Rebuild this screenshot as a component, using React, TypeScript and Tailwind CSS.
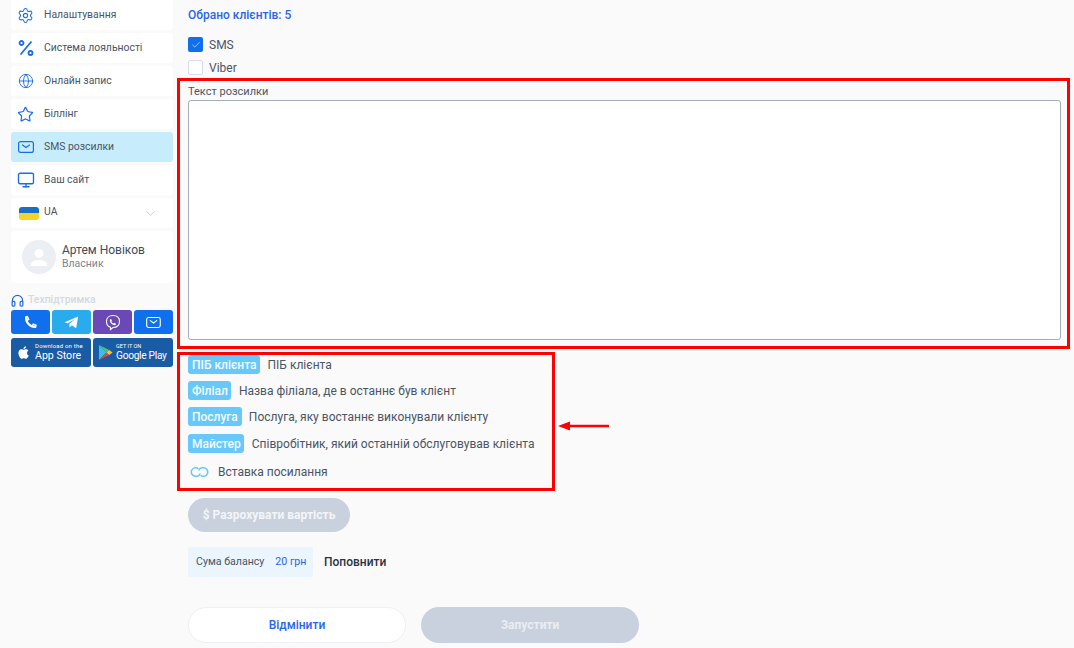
import React from 'react';
import { Settings, Globe, Star, Monitor, ChevronDown, Check } from 'lucide-react';

const MailIcon = ({ className }: { className?: string }) => (
  <svg viewBox="0 0 16 12" fill="none" stroke="currentColor" strokeWidth="1.2" className={className}>
    <rect x="0.6" y="0.6" width="14.8" height="10.8" rx="2" />
    <path d="M4.500 4 L8 6.500 L11.500 4" strokeLinecap="round" />
  </svg>
);

const PercentIcon = () => (
  <svg viewBox="0 0 16 16" fill="none" stroke="currentColor" strokeWidth="1.8" className="w-[16px] h-[16px]">
    <path d="M13.500 1.500 2.500 14.500" />
    <circle cx="3.500" cy="3" r="2" />
    <circle cx="12.500" cy="13" r="2" />
  </svg>
);

const navItems = [
  { label: 'Налаштування', icon: <Settings size={17} strokeWidth={1.5} /> },
  { label: 'Система лояльності', icon: <PercentIcon /> },
  { label: 'Онлайн запис', icon: <Globe size={16} strokeWidth={1.4} /> },
  { label: 'Біллінг', icon: <Star size={17} strokeWidth={1.7} /> },
  { label: 'SMS розсилки', icon: <MailIcon className="w-[16px] h-[12px]" />, active: true },
  { label: 'Ваш сайт', icon: <Monitor size={18} strokeWidth={1.8} /> },
];

const tags = [
  { tag: 'ПІБ клієнта', text: 'ПІБ клієнта', pad: 'pl-[4px] pr-[3px]', gap: 'ml-[8px]', top: '' },
  { tag: 'Філіал', text: 'Назва філіала, де в останнє був клієнт', pad: 'pl-[4px] pr-[3px]', gap: 'ml-[8px]', top: 'mt-[7px]' },
  { tag: 'Послуга', text: 'Послуга, яку востаннє виконували клієнту', pad: 'px-[4px]', gap: 'ml-[7px]', top: 'mt-[7px]' },
  { tag: 'Майстер', text: 'Співробітник, який останній обслуговував клієнта', pad: 'pl-[4px] pr-[3px]', gap: 'ml-[8px]', top: 'mt-[8px]' },
];

const Sidebar = () => (
  <aside className="w-[174px] shrink-0 pl-[11px] pr-px flex flex-col gap-[3px]">
    {navItems.map((item) => (
      <div
        key={item.label}
        className={`h-[30px] rounded-[3px] flex items-center text-[10.4px] text-[#4a5565] ${item.active ? 'bg-[#c7edfc]' : 'bg-white'}`}
      >
        <span className="w-[29px] mr-[4px] flex justify-center text-[#1a6dea]">{item.icon}</span>
        <span className="-mt-[1px]">{item.label}</span>
      </div>
    ))}
    <div className="h-[30px] rounded-[3px] bg-white flex items-center pl-[8px] pr-[15px] text-[10.4px] text-[#4a5565]">
      <span className="w-[20px] h-[13px] rounded-[3px] overflow-hidden flex flex-col">
        <span className="h-1/2 bg-[#1a6fc4]" />
        <span className="h-1/2 bg-[#f5d327]" />
      </span>
      <span className="ml-[5px] -mt-[2px]">UA</span>
      <ChevronDown size={15} strokeWidth={1} className="ml-auto text-[#aeb9c8]" />
    </div>
    <div className="h-[52px] rounded-[3px] bg-white flex items-center pl-[11px]">
      <div className="w-[34px] h-[34px] rounded-full bg-[#ebeef3] flex items-center justify-center">
        <svg viewBox="0 0 24 24" className="w-[24px] h-[24px] text-white" fill="currentColor">
          <circle cx="12" cy="8.500" r="4.500" />
          <path d="M3.500 21c0-4 3.800-6 8.500-6s8.500 2 8.500 6z" />
        </svg>
      </div>
      <div className="ml-[6px] -mt-[2px]">
        <div className="text-[12px] leading-[14px] text-[#414b59]">Артем Новіков</div>
        <div className="text-[10.500px] leading-[13px] text-[#7b8594]">Власник</div>
      </div>
    </div>
    <div className="mt-[6px] flex items-center h-[16px]">
      <svg viewBox="0 0 14 14" fill="none" stroke="#1a6dea" strokeWidth="1.3" className="w-[13px] h-[13px]">
        <path d="M1.500 9V7a5.500 5.500 0 0 1 11 0v2" />
        <rect x="1.200" y="8" width="3" height="5" rx="1.200" />
        <rect x="9.800" y="8" width="3" height="5" rx="1.200" />
      </svg>
      <span className="ml-[4px] text-[10.400px] font-medium text-[#d3d9e3]">Техпідтримка</span>
    </div>
    <div className="-mt-[1px] grid grid-cols-4 gap-[2px]">
      <div className="h-[24px] rounded-[3px] bg-[#0f6fec] flex items-center justify-center text-white">
        <svg viewBox="0 0 16 16" className="w-[15px] h-[15px]" fill="none" stroke="currentColor" strokeLinecap="round">
          <path d="M3.400 2.800C2.800 7.500 7.500 13 13 12.800" strokeWidth="2.300" />
          <path d="M3 2.200 4.600 1.800 6 4.600 4.800 5.500M13.500 12.600 13.800 11 11 9.800 10.200 11" strokeWidth="1.600" />
        </svg>
      </div>
      <div className="h-[24px] rounded-[3px] bg-[#2aabee] flex items-center justify-center text-white">
        <svg viewBox="0 0 16 14" className="w-[15px] h-[13px]" fill="currentColor">
          <path d="M0.500 6.600 15.200 0.600 13 13.200 8.400 10 6 12.400 5.600 8.600 11.800 3.400 4 7.900z" />
        </svg>
      </div>
      <div className="h-[24px] rounded-[3px] bg-[#6a48b5] flex items-center justify-center text-white">
        <svg viewBox="0 0 16 16" className="w-[16px] h-[17px]" fill="none" stroke="currentColor" strokeWidth="1.100">
          <path d="M8 1c4 0 6.500 1.600 6.500 6S12 13 8 13l-2.500 2v-2.200C2.800 12 1.500 10.500 1.500 7S4 1 8 1z" />
          <path d="M5.500 4.500c.8-.5 1.200 1 1.400 1.500.1.500-.6.700-.4 1.200.4.900 1.100 1.500 1.900 1.800.5.100.7-.6 1.200-.4.500.2 1.800.9 1.300 1.500-1 1.300-3 .6-4.700-1-1.500-1.500-1.700-3.700-.7-4.600z" fill="currentColor" stroke="none" />
        </svg>
      </div>
      <div className="h-[24px] rounded-[3px] bg-[#0f6fec] flex items-center justify-center text-white">
        <MailIcon className="w-[15px] h-[11px]" />
      </div>
    </div>
    <div className="mt-px grid grid-cols-2 gap-[2px]">
      <div className="h-[29px] rounded-[3px] bg-[#1a5ba6] flex items-center pl-[5px] text-white">
        <svg viewBox="0 0 24 24" className="w-[15px] h-[17px]" fill="currentColor">
          <path d="M17.600 12.700c0-2.600 2.100-3.800 2.200-3.900-1.200-1.800-3.100-2-3.700-2-1.600-.2-3.100.9-3.900.9-.8 0-2-.9-3.300-.9-1.700 0-3.300 1-4.200 2.500-1.800 3.100-.5 7.700 1.300 10.200.9 1.200 1.900 2.600 3.200 2.500 1.300 0 1.800-.8 3.300-.8s2 .8 3.300.8c1.400 0 2.300-1.200 3.100-2.500 1-1.400 1.400-2.800 1.400-2.900-.1 0-2.700-1-2.700-3.900z" />
          <path d="M15 5c.7-.9 1.200-2 1-3.200-1 0-2.200.7-2.900 1.500-.6.700-1.200 1.900-1 3 1.100.1 2.200-.5 2.900-1.300z" />
        </svg>
        <div className="ml-[4px] -mt-px">
          <div className="text-[6px] leading-[8px] whitespace-nowrap tracking-[0.2px]">Download on the</div>
          <div className="text-[10.600px] leading-[12px] whitespace-nowrap">App Store</div>
        </div>
      </div>
      <div className="h-[29px] rounded-[3px] bg-[#1a5ba6] flex items-center pl-[5px] text-white">
        <svg viewBox="0 0 16 18" className="w-[15px] h-[17px]">
          <path d="M1 1 9 9 1 17z" fill="#2fc4e8" />
          <path d="M1 1 12 6.300 9 9z" fill="#49c46a" />
          <path d="M1 17 12 11.700 9 9z" fill="#e8453f" />
          <path d="M12 6.300 15.500 9 12 11.700 9 9z" fill="#f7c52b" />
        </svg>
        <div className="ml-[3px] -mt-px">
          <div className="text-[5.500px] leading-[8px]">GET IT ON</div>
          <div className="text-[10.200px] leading-[12px] whitespace-nowrap tracking-[-0.3px]">Google Play</div>
        </div>
      </div>
    </div>
  </aside>
);

const App: React.FC = () => (
  <div className="relative w-[1074px] h-[648px] overflow-hidden bg-[#fafafa] flex font-['Roboto',sans-serif]">
    <Sidebar />
    <main className="flex-1 pl-[14px] pr-[13px]">
      <div className="mt-[7px] h-[16px] text-[12px] font-medium leading-[16px] text-[#2a66e8]">Обрано клієнтів: 5</div>

      <div className="mt-[14px] flex items-center h-[15px]">
        <span className="w-[15px] h-[15px] rounded-[2px] bg-[#0f6fec] flex items-center justify-center text-white">
          <Check size={10} strokeWidth={1.5} />
        </span>
        <span className="ml-[6px] text-[12px] text-[#4a5565]">SMS</span>
      </div>
      <div className="mt-[8px] flex items-center h-[15px]">
        <span className="w-[15px] h-[15px] rounded-[2px] bg-white border border-[#d8dde5]" />
        <span className="ml-[6px] text-[12px] text-[#4a5565]">Viber</span>
      </div>

      <div className="mt-[10px] h-[14px] text-[11px] leading-[14px] text-[#4a5565]">Текст розсилки</div>
      <div className="mt-[1px] h-[240px] rounded-[3px] bg-white border border-[#a5adb8]" />

      <div className="mt-[15px] flex flex-col">
        {tags.map((t) => (
          <div key={t.tag} className={`flex items-center h-[19px] text-[12px] text-[#4a5565] ${t.top}`}>
            <span className={`h-[19px] ${t.pad} rounded-[3px] bg-[#68c8fb] text-[#f2fbff] font-medium flex items-center`}>{t.tag}</span>
            <span className={t.gap}>{t.text}</span>
          </div>
        ))}
        <div className="mt-[9px] h-[19px] flex items-center text-[12px] text-[#4a5565]">
          <svg viewBox="0 0 20 12" fill="none" stroke="#68c8fb" strokeWidth="1.600" className="ml-[2px] w-[19px] h-[12px]">
            <path d="M8.800 2.600A4.500 4.500 0 1 0 6 10.500h1c2 0 3.500-1.500 3.500-3" />
            <path d="M11.200 9.400A4.500 4.500 0 1 0 14 1.500h-1c-2 0-3.500 1.500-3.500 3" />
          </svg>
          <span className="ml-[9px]">Вставка посилання</span>
        </div>
      </div>

      <div className="mt-[17px] w-[162px] h-[34px] rounded-[17px] bg-[#c9d1de] flex items-center justify-center text-[12px] font-bold text-[#f3f5f8]">
        $ Разрохувати вартість
      </div>

      <div className="mt-[15px] flex items-center">
        <div className="w-[125px] h-[30px] rounded-[3px] bg-[#eaf5fd] flex items-center pl-[8px] text-[10.600px] text-[#4a5565]">
          <span>Сума балансу</span>
          <span className="ml-[11px] text-[#2a66e8]">20 грн</span>
        </div>
        <span className="ml-[11px] text-[12px] font-medium text-[#2b3340]">Поповнити</span>
      </div>

      <div className="mt-[30px] flex gap-[15px]">
        <div className="w-[218px] h-[36px] rounded-[18px] bg-white border border-[#eef0f3] flex items-center justify-center text-[12px] font-medium text-[#2a66e8]">
          Відмінити
        </div>
        <div className="w-[218px] h-[36px] rounded-[18px] bg-[#c9d1de] flex items-center justify-center text-[12px] font-bold text-[#e9edf3]">
          Запустити
        </div>
      </div>
    </main>

    {/* red annotation marks drawn over the page */}
    <div className="absolute left-[177px] top-[78px] w-[893px] h-[271px] border-[3px] border-[#ff0000]" />
    <div className="absolute left-[177px] top-[352px] w-[378px] h-[139px] border-[3px] border-[#ff0000]" />
    <svg className="absolute left-[556px] top-[420px] w-[54px] h-[12px]" viewBox="0 0 54 12">
      <path d="M2 6 L14 1.500 V4.800 H53 V7.200 H14 V10.500z" fill="#ff0000" />
    </svg>
  </div>
);

export default App;
